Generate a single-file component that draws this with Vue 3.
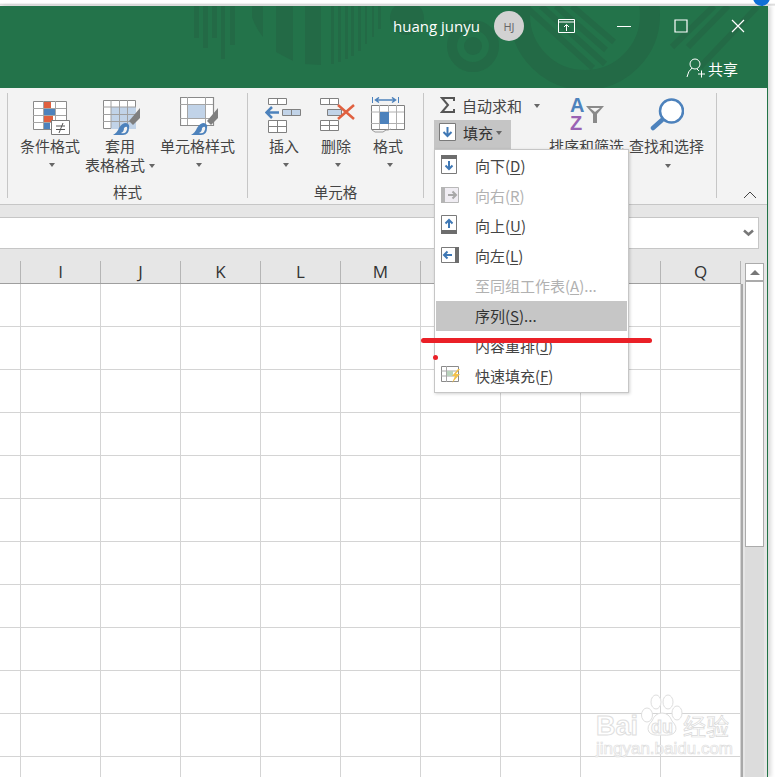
<script setup>
const columns = ["", "I", "J", "K", "L", "M", "N", "O", "P", "Q"];
const rows = Array.from({ length: 12 }, (_, i) => i);

const menuItems = [
  { id: "down", text: "向下(", key: "D", tail: ")" },
  { id: "right", text: "向右(", key: "R", tail: ")", disabled: true },
  { id: "up", text: "向上(", key: "U", tail: ")" },
  { id: "left", text: "向左(", key: "L", tail: ")" },
  { id: "group", text: "至同组工作表(", key: "A", tail: ")...", disabled: true },
  { id: "series", text: "序列(", key: "S", tail: ")...", active: true },
  { id: "justify", text: "内容重排(", key: "J", tail: ")" },
  { id: "flash", text: "快速填充(", key: "F", tail: ")" },
];
</script>

<template>
  <div class="page">
    <div class="window">
      <header class="titlebar">
        <svg class="deco" width="767" height="82" viewBox="0 6 767 82">
          <g fill="#236a46">
            <path d="M194 6h5v32h-5zM203 6h5v42h-5zM212 6h5v32h-5zM221 6h4v53h-4zM230 6h5v39h-5z" />
            <path d="M252 6h11v31q-7-8-11-20z" />
            <path d="M276 6h17v55l-17-9z" />
            <path d="M305 6h16v59l-16-1z" />
            <path d="M331 6h3v58h-3zM338 6h3v56h-3zM345 6h3v53h-3zM351 6h3v50h-3zM358 6h3v45h-3zM365 6h2v38h-2zM372 6h2v31h-2zM378 6h3v23h-3z" />
            <circle cx="407" cy="18" r="17" />
            <circle cx="473" cy="46" r="9" />
          </g>
          <circle cx="473" cy="46" r="21" fill="none" stroke="#236a46" stroke-width="10" />
          <circle cx="585" cy="15" r="65" fill="none" stroke="#236a46" stroke-width="20" />
          <g stroke="#236a46" stroke-width="6">
            <path d="M525 6l68 62M541 6l64 58M556 6l50 44M572 6l42 36" />
            <path d="M672 47l42-41M688 47l40-41M700 67l57-60" />
          </g>
        </svg>
        <div class="account">
          <span class="user">huang junyu</span>
          <span class="avatar">HJ</span>
          <svg class="ctl-first" width="17" height="14" viewBox="0 0 17 14" fill="none" stroke="#fff">
            <path d="M.5.5h16v13H.5zM.5 3h16" />
            <path d="M8.5 12V6M6 8l2.5-2.500L11 8" />
          </svg>
          <svg class="ctl-min" width="14" height="14" viewBox="0 0 14 14" stroke="#fff"><path d="M0 7.500h14" /></svg>
          <svg class="ctl-max" width="14" height="14" viewBox="0 0 14 14" fill="none" stroke="#fff" stroke-width="1.200"><path d="M1 1h12v12H1z" /></svg>
          <svg class="ctl-close" width="14" height="14" viewBox="0 0 14 14" stroke="#fff" stroke-width="1.200"><path d="M1 1l12 12M13 1L1 13" /></svg>
        </div>
        <div class="share">
          <svg width="20" height="20" viewBox="0 0 20 20" fill="none" stroke="#fff">
            <circle cx="9" cy="6" r="5" />
            <path d="M1 19q1-6 5-9M11 11l2 2M12 16h7M15.500 12.500v7" />
          </svg>
          <span>共享</span>
        </div>
      </header>

      <section class="ribbon">
        <div class="tail-sep"></div>
        <div class="group styles">
          <div class="tools">
            <span class="tool tool-cond">
              <svg width="37" height="34" viewBox="0 0 37 34">
                <path fill="#fff" stroke="#8a8a8a" d="M.5.5h33v28H.5z" />
                <path stroke="#a5a5a5" fill="none" d="M0 7.500h33M0 14.500h33M0 21.500h33M10.500 0v28M22.500 0v28" />
                <path fill="#e0603f" d="M11 1h7v6h-7zM11 15h9v6h-9z" />
                <path fill="#4d82bc" d="M11 8h11v6H11zM11 22h6v6h-6z" />
                <path fill="#fff" stroke="#7a7a7a" d="M18.500 19.500h18v14h-18z" />
                <path stroke="#555" fill="none" d="M23 25h9M23 28.500h9M30 22l-4 10" />
              </svg>
            </span>
            <span class="tool tool-table">
              <svg width="37" height="35" viewBox="0 0 37 35">
                <path fill="#fff" stroke="#8a8a8a" d="M.5.5h32v28H.5z" />
                <path fill="#c1d3e8" d="M8 7h25v22H8z" />
                <path stroke="#a0a0a0" fill="none" d="M0 7h33M0 14.500h33M0 21.500h33M8 0v28M16.500 0v28M24.500 0v28" />
                <path fill="#7f7f7f" d="M37 8v10l-7 7-4-4z" />
                <path fill="#4d82bc" d="M10 35q4-2 6-7 3-5 7-5 4 1 3 5 0 7-6 7z" />
                <path fill="#f3f3f3" d="M18 33q3-1 3-5 2-2 3-1 1 2-1 5-2 2-5 1z" />
              </svg>
            </span>
            <span class="tool tool-cell">
              <svg width="38" height="38" viewBox="0 0 38 38">
                <path fill="#fff" stroke="#8a8a8a" stroke-width="1.200" d="M.5.5h33v28H.5z" />
                <path stroke="#a5a5a5" fill="none" d="M0 7.500h33M0 21.500h33M7.500 0v28M25.500 0v28" />
                <path fill="#c1d3e8" d="M8 8h17v13H8z" />
                <path fill="#7f7f7f" d="M38 11v10l-7 7-4-4z" />
                <path fill="#4d82bc" d="M11 38q4-2 6-7 3-5 7-5 4 1 3 5 0 7-6 7z" />
                <path fill="#f3f3f3" d="M19 36q3-1 3-5 2-2 3-1 1 2-1 5-2 2-5 1z" />
              </svg>
            </span>
          </div>
          <div class="tool-labels">
            <div class="tl tl-cond"><span>条件格式</span><i class="caret"></i></div>
            <div class="tl tl-table"><span>套用</span><span class="line2">表格格式<i class="caret inline"></i></span></div>
            <div class="tl tl-cell"><span>单元格样式</span><i class="caret"></i></div>
          </div>
          <div class="group-name">样式</div>
        </div>

        <div class="sep"></div>

        <div class="group cells">
          <div class="tools">
            <span class="tool tool-ins">
              <svg width="36" height="35" viewBox="0 0 36 35">
                <path fill="#fff" stroke="#808080" d="M3.5.5h18v6h-18zM3.500 22.500h18v12h-18z" />
                <path stroke="#808080" d="M12.500 0v6M12.500 22v12M3 28.500h18" />
                <path fill="#c1d3e8" stroke="#808080" d="M17.500 11.500h18v6h-18z" />
                <path stroke="#808080" d="M26.500 11v6" />
                <path fill="none" stroke="#4d82bc" stroke-width="2.500" d="M14 14.500H2M7 9l-5.500 5.500L7 20" />
              </svg>
            </span>
            <span class="tool tool-del">
              <svg width="35" height="33" viewBox="0 0 35 33">
                <path fill="#fff" stroke="#808080" d="M.5.5h18v6H.5zM.5 22.500h18v10H.5z" />
                <path stroke="#808080" d="M9.500 0v6M9.500 22v10M0 27.500h18" />
                <path fill="#c1d3e8" stroke="#808080" d="M7.500 11.500h14v6h-14z" />
                <path fill="none" stroke="#e0603f" stroke-width="2.500" d="M18 7l16 14M34 7L18 21" />
              </svg>
            </span>
            <span class="tool tool-fmt">
              <svg width="34" height="36" viewBox="0 0 34 36">
                <path fill="none" stroke="#4d82bc" d="M1.500 0v6M27.500 0v6" />
                <path fill="none" stroke="#4d82bc" stroke-width="1.500" d="M5 3h19M8 .5L4.500 3 8 5.500M21 .5L24.500 3 21 5.500" />
                <path fill="#fff" stroke="#808080" d="M.5 8.500h33v24H.5z" />
                <path stroke="#b0b0b0" fill="none" d="M0 15h33M0 26.500h33M8.500 8v24M17.500 8v24M25.500 8v24" />
                <path fill="#4d82bc" d="M9 15h9v12H9z" />
                <path fill="none" stroke="#9a9a9a" d="M1 33l3 2h8l3-2h2l3-1" />
              </svg>
            </span>
          </div>
          <div class="tool-labels">
            <div class="tl tl-ins"><span>插入</span><i class="caret"></i></div>
            <div class="tl tl-del"><span>删除</span><i class="caret"></i></div>
            <div class="tl tl-fmt"><span>格式</span><i class="caret"></i></div>
          </div>
          <div class="group-name">单元格</div>
        </div>

        <div class="sep"></div>

        <div class="group editing">
          <div class="edit-left">
            <div class="autosum">
              <svg class="sigma" width="15" height="16" viewBox="0 0 15 16" fill="none" stroke="#555" stroke-width="2">
                <path d="M14 4V1H2l6 7-6 7h12v-3" />
              </svg>
              <span>自动求和</span>
              <i class="caret"></i>
            </div>
            <div class="fill-btn">
              <svg width="17" height="18" viewBox="0 0 17 18">
                <path fill="#fff" stroke="#7a7a7a" d="M.5.5h16v17H.5z" />
                <path fill="none" stroke="#3f78b5" stroke-width="2" d="M8.500 4v9M4.500 9l4 4 4-4" />
              </svg>
              <span>填充</span>
              <i class="caret"></i>
            </div>
          </div>
          <div class="edit-sort">
            <svg width="34" height="36" viewBox="0 0 34 36">
              <text x="0" y="15" class="az-a">A</text>
              <text x="0" y="33" class="az-z">Z</text>
              <path fill="#8a8a8a" d="M16 9h18l-7 8v9h-4v-9z" />
              <path fill="#f3f3f3" d="M20 11h10l-5 4z" />
            </svg>
            <span>排序和筛选</span>
          </div>
          <div class="edit-find">
            <svg width="34" height="34" viewBox="0 0 34 34" fill="none" stroke="#4d82bc">
              <circle cx="21.500" cy="13" r="11.500" fill="#fff" stroke-width="2.500" />
              <path stroke-width="4.500" stroke-linecap="round" d="M12 22l-9 8" />
            </svg>
            <span>查找和选择</span>
            <i class="caret"></i>
          </div>
        </div>

        <div class="sep"></div>
        <svg class="collapse" width="14" height="8" viewBox="0 0 14 8" fill="none" stroke="#444"><path d="M1 7l6-6 6 6" /></svg>
      </section>

      <section class="formula">
        <div class="formula-input">
          <svg width="11" height="8" viewBox="0 0 11 8" fill="none" stroke="#777" stroke-width="2.500"><path d="M1 1.500l4.500 4 4.500-4" /></svg>
        </div>
      </section>

      <section class="sheet">
        <div class="grid-wrap">
          <div class="col-heads">
            <div v-for="c in columns" :key="c" class="col-head" :class="{ first: !c }">{{ c }}</div>
          </div>
          <div class="grid">
            <div v-for="r in rows" :key="r" class="grid-row">
              <div v-for="c in columns" :key="c" class="cell" :class="{ first: !c }"></div>
            </div>
          </div>
        </div>
        <div class="scrollbar">
          <div class="sb-btn"><i></i></div>
          <div class="sb-thumb"></div>
        </div>
      </section>
    </div>

    <div class="menu">
      <div
        v-for="item in menuItems"
        :key="item.id"
        class="menu-item"
        :class="{ disabled: item.disabled, active: item.active }"
      >
        <span class="menu-icon">
          <svg v-if="item.id === 'down'" width="16" height="19" viewBox="0 0 16 19">
            <path fill="#fff" stroke="#7a7a7a" d="M.5.5h15v18H.5z" />
            <path fill="#6d6d6d" d="M0 0h16v4H0z" />
            <path fill="none" stroke="#3f78b5" stroke-width="2" d="M8 6v8M4.500 10.500L8 14l3.500-3.500" />
          </svg>
          <svg v-else-if="item.id === 'right'" width="18" height="16" viewBox="0 0 18 16">
            <path fill="#f0edf3" stroke="#b8b8b8" d="M.5.5h17v15H.5z" />
            <path fill="#b5b5b5" d="M0 0h4v16H0z" />
            <path fill="none" stroke="#a8a8a8" stroke-width="2" d="M7 8h8M11.500 4.500L15 8l-3.500 3.500" />
          </svg>
          <svg v-else-if="item.id === 'up'" width="16" height="19" viewBox="0 0 16 19">
            <path fill="#fff" stroke="#7a7a7a" d="M.5.5h15v18H.5z" />
            <path fill="#6d6d6d" d="M0 15h16v4H0z" />
            <path fill="none" stroke="#3f78b5" stroke-width="2" d="M8 13V5M4.500 8.500L8 5l3.500 3.500" />
          </svg>
          <svg v-else-if="item.id === 'left'" width="18" height="16" viewBox="0 0 18 16">
            <path fill="#fff" stroke="#7a7a7a" d="M.5.5h17v15H.5z" />
            <path fill="#6d6d6d" d="M14 0h4v16h-4z" />
            <path fill="none" stroke="#3f78b5" stroke-width="2" d="M11 8H3M6.500 4.500L3 8l3.500 3.500" />
          </svg>
          <svg v-else-if="item.id === 'flash'" width="20" height="17" viewBox="0 0 20 17">
            <path fill="#fff" stroke="#8a8a8a" d="M.5.5h17v15H.5z" />
            <path fill="none" stroke="#a8a8a8" d="M0 5h17M0 10h14M5.500 0v16" />
            <path fill="#b9d3bd" d="M6 5h6v5H6z" />
            <path fill="#f2c14b" d="M17 3l-6 7h3l-3 7 8-9h-4l4-5z" />
          </svg>
        </span>
        <span class="menu-text">{{ item.text }}<u>{{ item.key }}</u>{{ item.tail }}</span>
      </div>
    </div>

    <div class="red-line"></div>
    <div class="red-dot"></div>
    <div class="corner-dot"></div>

    <div class="watermark">
      <svg width="42" height="44" viewBox="0 0 42 44" fill="#fff" stroke="#dedede">
        <ellipse cx="6" cy="22" rx="5.500" ry="7" />
        <ellipse cx="15" cy="9" rx="5" ry="7" />
        <ellipse cx="27" cy="9" rx="5" ry="7" />
        <ellipse cx="36" cy="20" rx="5" ry="7" />
        <path d="M21 20q7 0 10 8 6 6 3 11-3 4-13 3-10 1-13-3-3-5 3-11 3-8 10-8z" />
      </svg>
      <span class="wm-bai">Bai</span>
      <span class="wm-du">du</span>
      <span class="wm-jy">经验</span>
      <span class="wm-url">jingyan.baidu.com</span>
    </div>
  </div>
</template>

<style scoped>
.page {
  position: relative;
  width: 775px;
  height: 777px;
  overflow: hidden;
  background: linear-gradient(#fff 3px, #d5d5d5 5px, #fff 6px);
  font-family: "Noto Sans CJK SC", "Noto Sans", sans-serif;
  color: #444;
  font-size: 15px;
  padding-top: 6px;
  box-sizing: border-box;
}

.window {
  width: 768px;
  height: 771px;
  border-right: 1px solid #217346;
  box-sizing: border-box;
  overflow: hidden;
  display: flex;
  flex-direction: column;
  background: #e6e6e6;
  box-shadow: 3px 0 4px rgba(0, 0, 0, 0.15);
}

.titlebar {
  position: relative;
  height: 82px;
  flex: none;
  background: #23734a;
  color: #fff;
}

.deco {
  position: absolute;
  left: 0;
  top: 0;
}

.account {
  position: relative;
  display: flex;
  align-items: center;
  height: 40px;
  padding-left: 393px;
}

.user {
  font-family: "Open Sans", "Noto Sans", sans-serif;
  font-size: 15px;
  width: 101px;
  white-space: nowrap;
}

.avatar {
  width: 30px;
  height: 30px;
  border-radius: 50%;
  background: #d2d2d2;
  color: #666;
  font-family: "Open Sans", sans-serif;
  font-size: 11px;
  display: flex;
  align-items: center;
  justify-content: center;
}

.ctl-first {
  margin-left: 34px;
}

.ctl-min {
  margin-left: 42px;
}

.ctl-max {
  margin-left: 43px;
}

.ctl-close {
  margin-left: 43px;
}

.share {
  position: relative;
  display: flex;
  align-items: center;
  justify-content: flex-end;
  gap: 2px;
  height: 36px;
  padding-right: 29px;
  line-height: 1;
  margin-top: 4px;
}

.ribbon {
  height: 117px;
  flex: none;
  display: flex;
  align-items: stretch;
  background: #f3f3f3;
  border-bottom: 1px solid #c6c6c6;
  box-sizing: border-box;
}

.tail-sep {
  width: 8px;
  margin: 5px 0 6px;
  border-right: 1px solid #c6c6c6;
  box-sizing: border-box;
  flex: none;
}

.sep {
  width: 1px;
  margin: 5px 0 6px;
  background: #c6c6c6;
  flex: none;
}

.group {
  display: flex;
  flex-direction: column;
  flex: none;
}

.styles {
  width: 239px;
}

.cells {
  width: 175px;
}

.tools {
  display: flex;
  align-items: flex-end;
  height: 47px;
}

.tool {
  display: block;
  flex: none;
}

.tool svg {
  display: block;
}

.tool-cond {
  margin-left: 25px;
}

.tool-table {
  margin-left: 33px;
}

.tool-cell {
  margin-left: 40px;
}

.tool-ins {
  margin-left: 17px;
  margin-bottom: 2px;
}

.tool-del {
  margin-left: 19px;
  margin-bottom: 4px;
}

.tool-fmt {
  margin-left: 16px;
  margin-bottom: 2px;
}

.tool-labels {
  display: flex;
  height: 47px;
  line-height: 19px;
  font-size: 15px;
  color: #444;
}

.tl {
  display: flex;
  flex-direction: column;
  align-items: center;
  flex: none;
  white-space: nowrap;
  padding-top: 1px;
}

.tl-cond {
  width: 60px;
  margin-left: 12px;
}

.tl-table {
  width: 70px;
  margin-left: 5px;
}

.tl-cell {
  width: 75px;
  margin-left: 5px;
}

.tl-ins {
  width: 36px;
  margin-left: 18px;
}

.tl-del {
  width: 36px;
  margin-left: 16px;
}

.tl-fmt {
  width: 36px;
  margin-left: 16px;
}

.line2 {
  display: flex;
  align-items: center;
}

.caret {
  display: block;
  width: 0;
  height: 0;
  margin: 8px 0 0 3px;
  border-left: 3.5px solid transparent;
  border-right: 3.5px solid transparent;
  border-top: 4px solid #666;
}

.caret.inline {
  margin: 2px 0 0 4px;
}

.group-name {
  text-align: center;
  font-size: 14.5px;
  line-height: 20px;
  color: #444;
}

.editing {
  width: 292px;
  flex-direction: row;
}

.edit-left {
  width: 125px;
  padding: 5px 0 0 10px;
  box-sizing: border-box;
}

.autosum {
  display: flex;
  align-items: center;
  height: 24px;
  color: #444;
  white-space: nowrap;
}

.sigma {
  flex: none;
  margin: 0 7px 0 6px;
}

.autosum .caret {
  margin: 2px 0 0 12px;
}

.fill-btn {
  margin-top: 3px;
  width: 77px;
  height: 30px;
  padding: 0 0 6px 5px;
  box-sizing: border-box;
  background: #c5c5c5;
  display: flex;
  align-items: center;
  gap: 7px;
  color: #333;
  white-space: nowrap;
}

.fill-btn svg {
  flex: none;
}

.fill-btn .caret {
  margin: 2px 0 0 -4px;
}

.edit-sort {
  width: 75px;
  display: flex;
  flex-direction: column;
  align-items: center;
  padding-top: 9px;
  white-space: nowrap;
  line-height: 20px;
}

.edit-sort svg {
  margin-bottom: 3px;
}

.az-a {
  font: 700 20px "Liberation Sans", sans-serif;
  fill: #4d82bc;
}

.az-z {
  font: 700 20px "Liberation Sans", sans-serif;
  fill: #9a62b3;
}

.edit-find {
  width: 75px;
  margin-left: 5px;
  display: flex;
  flex-direction: column;
  align-items: center;
  padding-top: 10px;
  white-space: nowrap;
  line-height: 20px;
}

.edit-find svg {
  margin-bottom: 4px;
}

.collapse {
  flex: none;
  align-self: flex-end;
  margin: 0 0 5px 26px;
}

.formula {
  height: 44px;
  flex: none;
  box-sizing: border-box;
  padding: 12px 8px 0 0;
}

.formula-input {
  height: 32px;
  box-sizing: border-box;
  background: #fff;
  border: 1px solid #c6c6c6;
  border-left: 0;
  display: flex;
  align-items: center;
  justify-content: flex-end;
  padding-right: 4px;
}

.sheet {
  flex: 1;
  display: flex;
  min-height: 0;
  overflow: hidden;
}

.grid-wrap {
  width: 741px;
  flex: none;
}

.col-heads {
  display: flex;
  height: 35px;
  box-sizing: border-box;
  border-bottom: 1px solid #9f9f9f;
  background: #e6e6e6;
  padding-top: 12px;
}

.col-head {
  width: 80px;
  flex: none;
  box-sizing: border-box;
  border-right: 1px solid #b5b5b5;
  text-align: center;
  font-family: "Open Sans", "Liberation Sans", sans-serif;
  font-size: 17px;
  line-height: 22px;
  color: #333;
}

.col-head.first {
  width: 21px;
}

.grid {
  background: #fff;
  box-shadow: 2px 0 0 #a8a8a8;
}

.grid-row {
  display: flex;
  height: 43px;
  box-sizing: border-box;
  border-bottom: 1px solid #d4d4d4;
}

.cell {
  width: 80px;
  flex: none;
  box-sizing: border-box;
  border-right: 1px solid #d4d4d4;
}

.cell.first {
  width: 21px;
}

.scrollbar {
  width: 19px;
  margin-left: 4px;
  margin-top: 14px;
  background: #dcdcdc;
}

.sb-btn {
  height: 19px;
  box-sizing: border-box;
  background: #fff;
  border: 1px solid #ababab;
  border-bottom-width: 2px;
  display: flex;
  align-items: center;
  justify-content: center;
}

.sb-btn i {
  width: 0;
  height: 0;
  border-left: 5px solid transparent;
  border-right: 5px solid transparent;
  border-bottom: 5px solid #777;
}

.sb-thumb {
  height: 265px;
  box-sizing: border-box;
  border: 1px solid #ababab;
  border-top: 0;
  background: #fff;
}

.menu {
  position: absolute;
  left: 434px;
  top: 149px;
  width: 195px;
  height: 244px;
  padding: 1px;
  box-sizing: border-box;
  background: #fff;
  border: 1px solid #c6c6c6;
  box-shadow: 1px 1px 3px rgba(0, 0, 0, 0.18);
}

.menu-item {
  height: 30px;
  display: flex;
  align-items: center;
  color: #444;
  white-space: nowrap;
}

.menu-item.disabled {
  color: #b1b1b1;
}

.menu-item.active {
  background: #c6c6c6;
  color: #333;
}

.menu-icon {
  width: 39px;
  flex: none;
  display: flex;
  padding-left: 5px;
  box-sizing: border-box;
  margin-top: -3px;
}

.menu-text {
  margin-top: -2px;
}

.menu-text u {
  text-underline-offset: 2px;
}

.red-line {
  position: absolute;
  left: 421px;
  top: 338px;
  width: 231px;
  height: 5px;
  border-radius: 3px;
  background: #ea2027;
}

.red-dot {
  position: absolute;
  left: 433px;
  top: 355px;
  width: 5px;
  height: 5px;
  border-radius: 50%;
  background: #ea2027;
}

.corner-dot {
  position: absolute;
  left: 753px;
  top: -11px;
  width: 17px;
  height: 17px;
  border-radius: 50%;
  background: #0f6fd6;
}

.watermark {
  position: absolute;
  left: 590px;
  top: 690px;
  width: 150px;
  height: 80px;
  color: #fff;
  font-family: "Liberation Sans", sans-serif;
  -webkit-text-stroke: 1px #dedede;
}

.watermark svg {
  position: absolute;
  left: 51px;
  top: 3px;
}

.wm-bai {
  position: absolute;
  left: 6px;
  top: 21px;
  font-size: 27px;
  font-weight: 700;
}

.wm-du {
  position: absolute;
  left: 61px;
  top: 27px;
  font-size: 18px;
  font-weight: 700;
}

.wm-jy {
  position: absolute;
  left: 93px;
  top: 19px;
  font-family: "Noto Sans CJK SC", sans-serif;
  font-size: 23px;
  line-height: 32px;
  -webkit-text-stroke: 0.7px #d8d8d8;
  white-space: nowrap;
}

.wm-url {
  position: absolute;
  left: 6px;
  top: 49px;
  font-size: 17px;
  white-space: nowrap;
  -webkit-text-stroke: 0.7px #dedede;
}
</style>

<style>
html,
body {
  margin: 0;
  background: #fff;
}
</style>
